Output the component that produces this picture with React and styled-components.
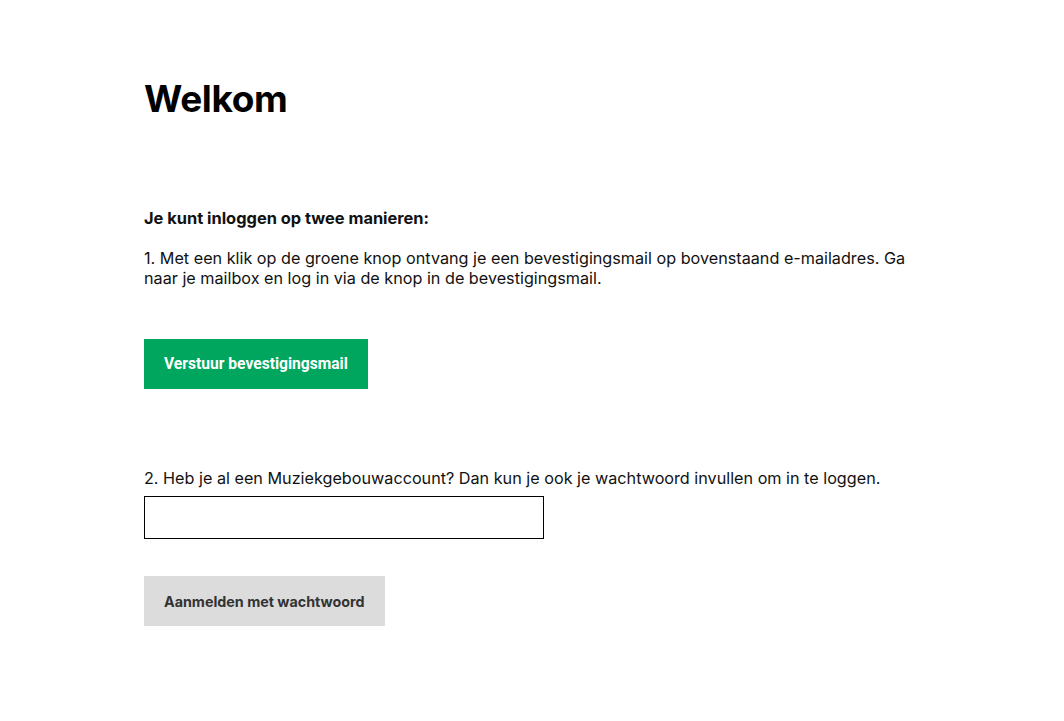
import React from 'react';
import styled, { createGlobalStyle } from 'styled-components';

const GlobalStyle = createGlobalStyle`
  body {
    margin: 0;
    background: #fff;
    font-family: Inter, "Noto Sans", sans-serif;
    color: #111;
  }
`;

const Page = styled.main`
  padding: 75px 0 60px 144px;
  width: 780px;
`;

const Heading = styled.h1`
  margin: 0;
  font-size: 37px;
  line-height: 48px;
  font-weight: 700;
  letter-spacing: -0.4px;
  color: #000;
`;

const Intro = styled.p`
  margin: 85px 0 0;
  font-size: 16.4px;
  line-height: 20px;
  font-weight: 700;
`;

const Body = styled.p`
  margin: ${props => props.gap || 0}px 0 0;
  font-size: 16.2px;
  line-height: 20px;
  font-weight: 400;
`;

const Button = styled.button`
  display: block;
  margin-top: ${props => props.gap}px;
  height: 50px;
  padding: 0 20px;
  border: none;
  border-radius: 0;
  font-family: ${props => (props.primary ? 'Roboto, sans-serif' : 'Inter, sans-serif')};
  font-size: ${props => (props.primary ? '15.6px' : '14.3px')};
  font-weight: 700;
  background: ${props => (props.primary ? '#00a65d' : '#dcdcdc')};
  color: ${props => (props.primary ? '#fff' : '#333')};
  cursor: pointer;
`;

const Input = styled.input`
  display: block;
  box-sizing: border-box;
  margin-top: 8px;
  width: 400px;
  height: 43px;
  border: 1px solid #000;
  border-radius: 0;
  padding: 0 10px;
  font-size: 16px;
  font-family: inherit;
`;

export default function App() {
  return (
    <>
      <GlobalStyle />
      <Page>
        <Heading>Welkom</Heading>
        <Intro>Je kunt inloggen op twee manieren:</Intro>
        <Body gap={20}>
          1. Met een klik op de groene knop ontvang je een bevestigingsmail op bovenstaand e-mailadres. Ga
          naar je mailbox en log in via de knop in de bevestigingsmail.
        </Body>
        <Button primary gap={51}>Verstuur bevestigingsmail</Button>
        <Body gap={79}>
          2. Heb je al een Muziekgebouwaccount? Dan kun je ook je wachtwoord invullen om in te loggen.
        </Body>
        <Input type="password" />
        <Button gap={37}>Aanmelden met wachtwoord</Button>
      </Page>
    </>
  );
}
